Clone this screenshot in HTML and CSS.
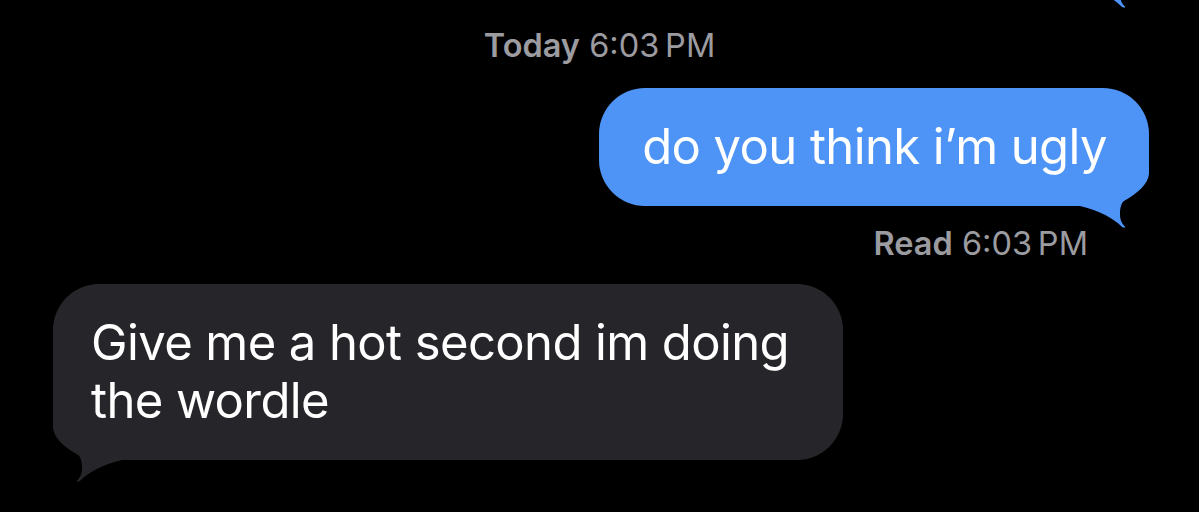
FILE: index.html
```html
<!DOCTYPE html>
<html lang="en">
<head>
<meta charset="utf-8">
<title>Messages</title>
<link rel="stylesheet" href="styles.css">
</head>
<body>
<main class="thread">
  <div class="row row-me row-prev">
    <div class="bubble bubble-me bubble-prev" aria-hidden="true">
      <svg class="tail" viewBox="0 0 70 70" width="70" height="70"><path d="M0 0 H70 V16 C69 26 58 36 47 41 C42 44 41 50 41 56 C41 62 43 66 46 68.5 C47 70 44 70 42 68 C35 61 22 53 1 48 H0 Z"/></svg>
    </div>
  </div>
  <p class="stamp"><b>Today</b> 6:03&#8239;PM</p>
  <div class="row row-me">
    <div class="bubble bubble-me">do you think i’m ugly<svg class="tail" viewBox="0 0 70 70" width="70" height="70"><path d="M0 0 H70 V16 C69 26 58 36 47 41 C42 44 41 50 41 56 C41 62 43 66 46 68.5 C47 70 44 70 42 68 C35 61 22 53 1 48 H0 Z"/></svg></div>
  </div>
  <p class="receipt"><b>Read</b> 6:03&#8239;PM</p>
  <div class="row row-them">
    <div class="bubble bubble-them">Give me a hot second im doing the wordle<svg class="tail" viewBox="0 0 70 70" width="70" height="70"><path d="M0 0 H70 V16 C69 26 58 36 47 41 C42 44 41 50 41 56 C41 62 43 66 46 68.5 C47 70 44 70 42 68 C35 61 22 53 1 48 H0 Z"/></svg></div>
  </div>
</main>
</body>
</html>
```

FILE: styles.css
```css
html, body {
  margin: 0;
  padding: 0;
  background: #000;
  height: 100%;
  overflow: hidden;
}

.thread {
  display: flex;
  flex-direction: column;
  padding: 0 50px 0 53px;
  font-family: "Inter", "Noto Sans", sans-serif;
  color: #fff;
}

.row {
  display: flex;
}

.row-me {
  justify-content: flex-end;
}

.row-them {
  justify-content: flex-start;
}

.row-prev {
  margin-top: -132px;
}

.bubble {
  position: relative;
  isolation: isolate;
  box-sizing: border-box;
  padding: 30px 42px 30px 43px;
  border-radius: 46px;
  font-size: 49px;
  line-height: 58px;
  letter-spacing: -0.6px;
  width: fit-content;
}

.bubble-me {
  background: #4e94f6;
  fill: #4e94f6;
}

.bubble-prev {
  width: 420px;
  height: 118px;
}

.bubble-them {
  background: #26252a;
  fill: #26252a;
  max-width: 790px;
  padding-left: 38px;
}

.tail {
  position: absolute;
  z-index: -1;
  bottom: -22px;
  right: 0;
  display: block;
}

.bubble-them .tail {
  right: auto;
  left: 0;
  transform: scaleX(-1);
}

.stamp,
.receipt {
  margin: 0;
  font-size: 32.5px;
  line-height: 38px;
  letter-spacing: 0;
  color: #9b9ba0;
  font-weight: 400;
}

.stamp b,
.receipt b {
  font-weight: 600;
}

.stamp {
  text-align: center;
  margin: 41px 0 23px -3px;
}

.receipt {
  text-align: right;
  margin: 19px 61px 21px 0;
}
```
